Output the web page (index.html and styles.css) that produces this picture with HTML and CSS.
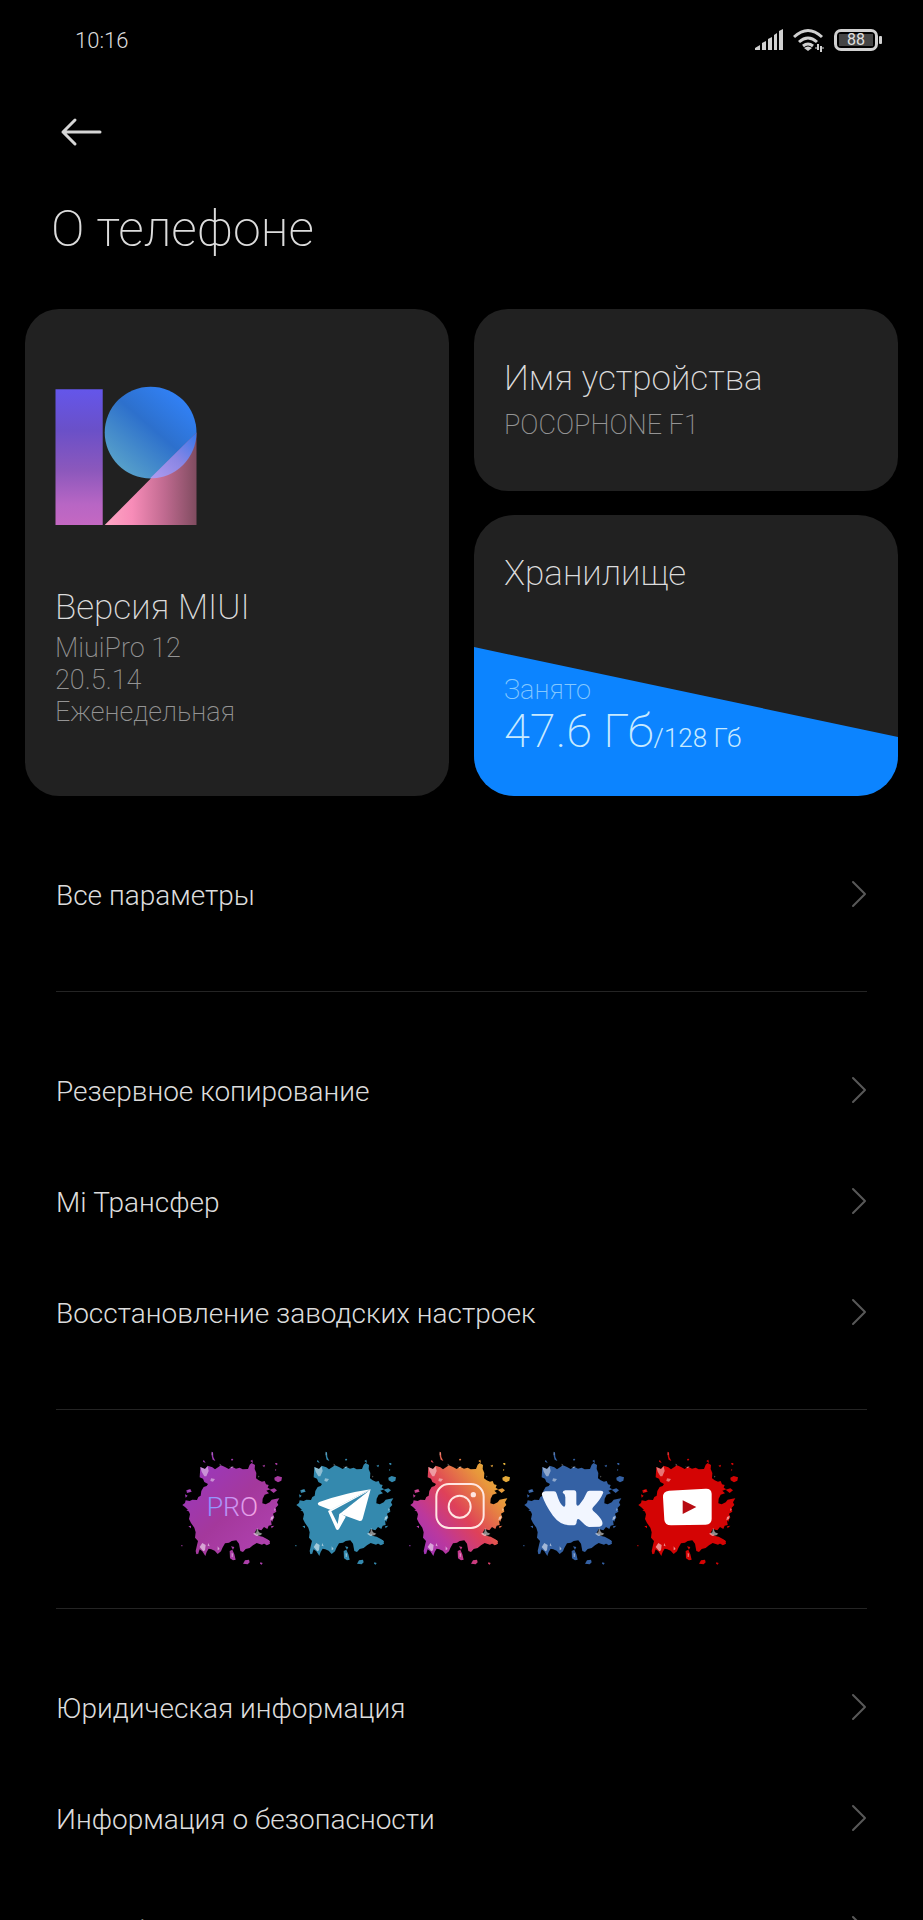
FILE: index.html
```html
<!DOCTYPE html>
<html lang="ru">
<head>
  <meta charset="UTF-8" />
  <meta name="viewport" content="width=device-width, initial-scale=1.0"/>
  <title>О телефоне</title>
  <link rel="stylesheet" href="styles.css">
</head>
<body>
  <!-- shared shapes -->
  <svg class="defs" width="0" height="0" aria-hidden="true">
    <defs>
      <symbol id="chevron" viewBox="0 0 16 28">
        <path d="M2 2l12 12L2 26" fill="none" stroke="#585858" stroke-width="2" stroke-linecap="round" stroke-linejoin="round"/>
      </symbol>
      <g id="splash">
        <path d="M88 84l14 6 8-10 14 5 8 6 18-12 12 5 11 6 10-7 12 6 11-3 9 5 16-1 5-13 6-5 10 6-1 12 5 12-1 16 8 6 10 4 8-2 4 10 8 2-3 8 8 5-12 4 8 8-13 4-6 12-1 14 10 3 12-6 6-8 14-3 9-1-7 12 4 8-8 8 2 12-10 6 4 12-10 8 2 14-9 2-4 10-10-6-8 10-14-4-6 12 10 8 14 3 14 8 8 6-6 10-10-4-8 4-16-5-11 7-10 8-12 3-8 9-8-3-4-22-8-10-14 2-8 5-12 2-8 14-4 10-10 8-9-10-10-4-8-2-6 10-4 12-9-14-8-6-4 12-6 3-2-10 4-18 3-12-9-10 2-16-4-14-10-14-6-12 3-14-5-12-10-10-8-6 8-6 2-8 12 2 8-4 14 1 4-9 7-4 2-14 7-12 9-3 4-6-11-6-4-10-10-4z"/>
        <path d="M310 116l10-5 13 4-2 10-10 5-10-6zM296 152l14-4 8 6-10 8zM176 336l8-4 6 14 4 16-8 2-9-6zM180 322l10 2-4 8zM216 374l6-10 12-2 2 8-6 6zM268 370l7 2-3 5-5-3zM276 300l18 4 3 10-10 5-10-7zM122 38l4 2 1 14 6 12-8-4-3-12zM180 60l5-1 2 4-5 2zM46 154l12-4 4 8-14 4zM42 166l8 4-6 6zM312 72l6 0 2 4-5 3zM274 80l8-3-2 8zM98 62l6 10-8-4zM30 318l5 1-2 4zM78 340l5 2-4 4zM296 240l12-4-4 12zM300 262l10-2-8 8zM254 296l6-12 4 14zM238 66l6-4 2 10zM312 90l4 2-2 5zM58 210l-12 4 10 4zM60 260l-8 2 8 6z"/>
      </g>
      <g id="flecks" fill="#fff">
        <path opacity=".45" d="M88 84l14 6 8-8 3 14-7 16-6 0-8-14zM120 118l12 2-6 8-8-2z"/>
        <path opacity=".55" d="M246 284l10-4 2-14 6 14 10 4-6 5-12 2zM300 234l8-4-2 10-8 4zM86 324l8-12 10 6-2 16-5 3zM112 312l4 10-6-2zM140 322l6 8-6 4z"/>
        <path opacity=".5" d="M122 40l2 1 0 7-2 0zM310 208l4 3-4 6zM182 342l4 2-1 10-3 0zM52 154l4 1-2 3zM172 80l6 4 10-2-6 6zM262 110l3 2-2 4zM146 74l3 2-2 8z"/>
      </g>
      <linearGradient id="g-pro" x1="0" y1="0" x2="1" y2="1">
        <stop offset=".15" stop-color="#9c38b8"/><stop offset=".5" stop-color="#a4389c"/><stop offset="1" stop-color="#b244b4"/>
      </linearGradient>
      <linearGradient id="g-protext" x1="0" y1="0" x2="1" y2="0">
        <stop offset="0" stop-color="#7f96ff"/><stop offset=".5" stop-color="#c894f4"/><stop offset="1" stop-color="#f8a8e0"/>
      </linearGradient>
      <linearGradient id="g-insta" x1="0" y1=".9" x2="1" y2=".1">
        <stop offset="0" stop-color="#9a35c0"/><stop offset=".25" stop-color="#bc389c"/><stop offset=".5" stop-color="#df4158"/><stop offset=".8" stop-color="#e8963c"/><stop offset="1" stop-color="#e4bc38"/>
      </linearGradient>
      <linearGradient id="g-one" x1="0" y1="0" x2="0" y2="1">
        <stop offset="0" stop-color="#6456ea"/><stop offset=".3" stop-color="#6a50c8"/><stop offset=".6" stop-color="#8c58bc"/><stop offset=".85" stop-color="#b866c4"/><stop offset="1" stop-color="#c468c2"/>
      </linearGradient>
      <linearGradient id="g-circle" x1=".85" y1=".15" x2=".2" y2=".9">
        <stop offset="0" stop-color="#3180f4"/><stop offset=".45" stop-color="#2d70cc"/><stop offset="1" stop-color="#569fca"/>
      </linearGradient>
      <linearGradient id="g-leg" x1="0" y1="0" x2="1" y2="0">
        <stop offset="0" stop-color="#ffa6c4"/><stop offset=".3" stop-color="#f78cb8"/><stop offset=".65" stop-color="#c06a90"/><stop offset="1" stop-color="#804c60"/>
      </linearGradient>
      <linearGradient id="g-cross" x1="0" y1="1" x2="1" y2="0">
        <stop offset="0" stop-color="#b09cf0"/><stop offset=".5" stop-color="#8a86e4"/><stop offset="1" stop-color="#3478ec"/>
      </linearGradient>
      <clipPath id="c-circle"><circle cx="287" cy="140" r="138"/></clipPath>
    </defs>
  </svg>

  <div class="phone">
    <div class="statusbar">
      <time class="clock">10:16</time>
      <div class="status-icons">
        <svg class="signal" viewBox="0 0 30 22" fill="#d0d0d0">
          <path d="M1 21v-2l5-3v5zM8 21v-7l4-2v9zM14 21V10l4-2v13zM20 21V6l3-2v17zM25 21V2l4-2v21z"/>
        </svg>
        <svg class="wifi" viewBox="0 0 32 24" fill="none" stroke="#d0d0d0" stroke-width="3">
          <path d="M1 9Q15-4 29 9M6 14q9-8 18 0M10 18q5-4 10 0"/>
          <path d="M11 20q4-3 8 0l-4 3z" fill="#d0d0d0" stroke="none"/>
          <path d="M25 16v6M28 18v6" stroke-width="2"/>
          <path d="M22 20h3M28 20h3" stroke-width="1"/>
        </svg>
        <div class="battery"><span>88</span></div>
      </div>
    </div>

    <main class="content">
      <header class="header">
        <button class="back" type="button" aria-label="Назад">
          <svg viewBox="0 0 42 30" fill="none" stroke="#d6d6d6" stroke-width="3" stroke-linecap="round" stroke-linejoin="round">
            <path d="M40 15H3M15 3L3 15l12 12"/>
          </svg>
        </button>
        <h1>О телефоне</h1>
      </header>

      <div class="cards">
        <section class="card version">
          <svg class="miui-logo" viewBox="0 0 426 418">
            <path fill="url(#g-one)" d="M1 10h142v408H1z"/>
            <circle cx="287" cy="140" r="138" fill="url(#g-circle)"/>
            <path fill="url(#g-leg)" d="M149 418L425 140v278z"/>
            <path fill="url(#g-cross)" clip-path="url(#c-circle)" d="M285 278L425 140v138z"/>
          </svg>
          <h2>Версия MIUI</h2>
          <p>MiuiPro 12<br>20.5.14<br>Еженедельная</p>
        </section>
        <section class="card device">
          <h2>Имя устройства</h2>
          <p>POCOPHONE F1</p>
        </section>
        <section class="card storage">
          <h2>Хранилище</h2>
          <div class="usage">
            <p class="label">Занято</p>
            <p class="amount">47.6 Гб<span>/128 Гб</span></p>
          </div>
        </section>
      </div>

      <nav class="group">
        <a href="#">Все параметры<svg><use href="#chevron"/></svg></a>
      </nav>
      <nav class="group">
        <a href="#">Резервное копирование<svg><use href="#chevron"/></svg></a>
        <a href="#">Mi Трансфер<svg><use href="#chevron"/></svg></a>
        <a href="#">Восстановление заводских настроек<svg><use href="#chevron"/></svg></a>
      </nav>
      <div class="social">
        <a href="#" aria-label="MiuiPro">
          <svg viewBox="18 0 342 420">
            <use href="#splash" fill="url(#g-pro)"/><use href="#flecks"/>
            <text class="pro" x="107" y="230" fill="url(#g-protext)">PRO</text>
          </svg>
        </a>
        <a href="#" aria-label="Telegram">
          <svg viewBox="18 0 342 420">
            <use href="#splash" fill="#3489ae"/><use href="#flecks"/>
            <g fill="#fff">
              <path d="M257 151q-80 12-154 38-8 4-2 10l36 14z"/>
              <path d="M257 151L129 216l24 54q4 6 9 0l20-36-16-12z"/>
              <path d="M257 151L164 224l60 22q7 1 9-7z"/>
            </g>
            <path d="M250 157l-111 60 19 38 5-30zM138 216l-8-3" fill="#3489ae"/>
            <path d="M164 226l-4 42 22-36z" fill="#fff"/>
          </svg>
        </a>
        <a href="#" aria-label="Instagram">
          <svg viewBox="18 0 342 420">
            <use href="#splash" fill="url(#g-insta)"/><use href="#flecks"/>
            <g fill="none" stroke="#ffe6e2" stroke-width="6">
              <rect x="112" y="135" width="142" height="132" rx="38"/>
              <circle cx="182" cy="203" r="33"/>
            </g>
            <circle cx="223" cy="167" r="8" fill="#ffe6e2"/>
          </svg>
        </a>
        <a href="#" aria-label="VK">
          <svg viewBox="18 0 342 420">
            <use href="#splash" fill="#3461a4"/><use href="#flecks"/>
            <path fill="#f2f6ff" d="M97 157h26q6 0 8 7 8 28 19 38 6 4 7-5v-22q0-10-8-14 0-6 8-7h26q7 0 7 9v32q2 9 9 2 14-16 22-36 2-6 9-6h34q9 0 6 8-8 20-29 41-6 6 0 12 20 17 26 30 5 14-7 17l-32 1q-8-2-14-8l-14-14q-8-5-9 5 0 11-8 12h-14q-29-2-49-29-23-31-33-62-2-9 10-11z"/>
          </svg>
        </a>
        <a href="#" aria-label="YouTube">
          <svg viewBox="18 0 342 420">
            <use href="#splash" fill="#d40404"/><use href="#flecks"/>
            <path fill="#fff" d="M126 155l110-6q17-1 18 15v76q0 16-18 17l-104 2q-18 0-20-16l-4-68q-1-18 18-20z"/>
            <path fill="#b80c12" d="M167 184l41 20-41 21z"/>
          </svg>
        </a>
      </div>
      <nav class="group">
        <a href="#">Юридическая информация<svg><use href="#chevron"/></svg></a>
        <a href="#">Информация о безопасности<svg><use href="#chevron"/></svg></a>
        <a href="#">Сертификация<svg><use href="#chevron"/></svg></a>
      </nav>
    </main>
  </div>
</body>
</html>
```

FILE: styles.css
```css
* {
  box-sizing: border-box;
}
body {
  margin: 0;
  background-color: #000;
  color: #dcdcdc;
  font-family: Roboto, 'Noto Sans', sans-serif;
  font-weight: 300;
}
h1, h2, p {
  margin: 0;
  font-weight: 200;
}
a {
  color: inherit;
  text-decoration: none;
}
.defs {
  position: absolute;
}
.phone {
  display: flex;
  flex-direction: column;
  height: 100vh;
}

/* status bar */
.statusbar {
  display: flex;
  flex-shrink: 0;
  justify-content: space-between;
  align-items: center;
  height: 80px;
  padding: 0 41px 0 75px;
}
.clock {
  font-size: 22px;
}
.status-icons {
  display: flex;
  align-items: center;
  gap: 9px;
}
.signal {
  width: 30px;
  height: 22px;
}
.wifi {
  width: 32px;
  height: 24px;
}
.battery {
  position: relative;
  width: 44px;
  height: 22px;
  margin-right: 4px;
  padding: 2px;
  border: 3px solid #d0d0d0;
  border-radius: 7px;
}
.battery span {
  display: block;
  background-color: #444;
  color: #e0e0e0;
  font-size: 16px;
  font-weight: 400;
  line-height: 12px;
  text-align: center;
}
.battery::after {
  content: "";
  position: absolute;
  top: 4px;
  right: -7px;
  width: 3px;
  height: 8px;
  background-color: #d0d0d0;
  border-radius: 1px;
}

.content {
  flex: 1;
  min-height: 0;
  overflow-y: auto;
  scrollbar-width: none;
}
.header {
  padding: 24px 51px 50px;
}
.back {
  display: flex;
  align-items: center;
  height: 56px;
  margin-bottom: 39px;
  padding: 0 9px;
  background: none;
  border: none;
  cursor: pointer;
}
.back svg {
  width: 42px;
  height: 30px;
}
h1 {
  font-size: 50px;
  line-height: 60px;
}

/* cards */
.cards {
  display: grid;
  grid-template-columns: 1fr 1fr;
  gap: 24px 25px;
  padding: 0 25px;
}
.card {
  padding: 0 30px;
  background-color: #212121;
  border-radius: 34px;
}
.card h2 {
  font-size: 35px;
  line-height: 44px;
}
.card p {
  color: #949494;
  font-size: 27px;
  line-height: 32px;
}
.version {
  grid-row: span 2;
  padding-top: 77px;
  padding-bottom: 68px;
}
.miui-logo {
  display: block;
  width: 142px;
  height: 139px;
  margin-bottom: 61px;
}
.version p {
  margin-top: 2px;
}
.device {
  padding-top: 48px;
  padding-bottom: 50px;
}
.device p {
  margin-top: 8px;
}
.storage {
  position: relative;
  padding-top: 37px;
  padding-bottom: 40px;
  border-radius: 40px;
  overflow: hidden;
}
.storage::before {
  content: "";
  position: absolute;
  inset: 0;
  background-color: #0c84ff;
  clip-path: polygon(0 47%, 100% 79%, 100% 100%, 0 100%);
}
.usage {
  position: relative;
  margin-top: 78px;
}
.usage .label {
  color: #84c8ff;
}
.usage .amount {
  color: #c8eaff;
  font-size: 47px;
  line-height: 50px;
}
.amount span {
  font-size: 26px;
  font-weight: 300;
  line-height: 1;
}

/* list */
.group {
  margin: 0 56px;
  padding: 44px 0 40px;
}
.group + .group, .group + .social, .social + .group {
  border-top: 1px solid #242424;
}
.group a {
  display: flex;
  justify-content: space-between;
  align-items: center;
  height: 111px;
  font-size: 28px;
}
.group svg {
  width: 16px;
  height: 28px;
  margin-bottom: 4px;
}
.social {
  display: flex;
  justify-content: center;
  margin: 0 56px;
  padding: 29px 0;
}
.social svg {
  display: block;
  width: 114px;
  height: 140px;
}
.pro {
  font-family: Roboto, sans-serif;
  font-size: 80px;
  font-weight: 300;
}
```
